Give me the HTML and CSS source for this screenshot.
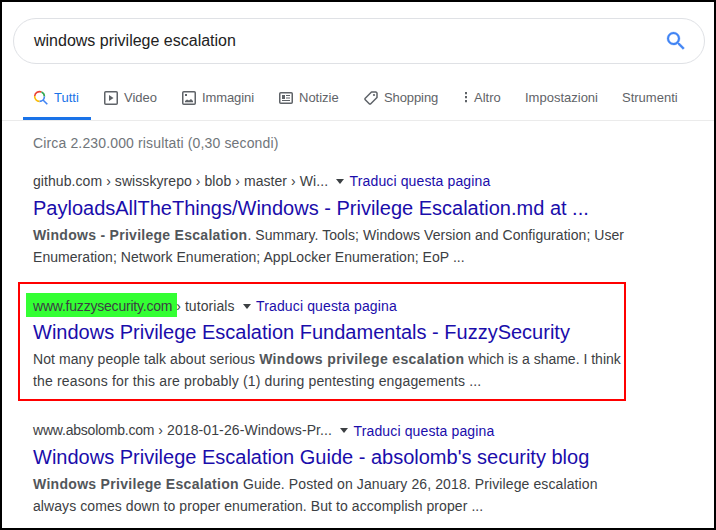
FILE: index.html
```html
<!DOCTYPE html>
<html lang="it">
<head>
<meta charset="utf-8">
<title>windows privilege escalation</title>
<link rel="stylesheet" href="styles.css">
</head>
<body>
<div class="page">
  <form class="search">
    <span class="query">windows privilege escalation</span>
    <svg class="lens" viewBox="0 0 24 24"><path d="M15.5 14h-.79l-.28-.27A6.47 6.47 0 0 0 16 9.5 6.5 6.5 0 1 0 9.5 16c1.61 0 3.09-.59 4.23-1.57l.27.28v.79l5 4.99L20.49 19l-4.99-5zm-6 0C7.01 14 5 11.99 5 9.5S7.01 5 9.5 5 14 7.01 14 9.5 11.99 14 9.5 14z"/></svg>
  </form>
  <nav class="tabs">
    <a class="tab tab-all">
      <svg class="icon" viewBox="0 0 16 16" fill="none" stroke-width="1.6"><path stroke="#ea4335" d="M1.700 6A4.9 4.9 0 0 1 8.500 2"/><path stroke="#34a853" d="M8.500 2A4.900 4.900 0 0 1 11.400 6.500"/><path stroke="#4285f4" d="M11.400 6.500A4.900 4.900 0 0 1 6.500 11.400M10 10l4.300 4.300"/><path stroke="#fbbc05" d="M6.500 11.400A4.900 4.900 0 0 1 1.700 6"/></svg><span>Tutti</span></a>
    <a class="tab tab-video">
      <svg class="icon" viewBox="0 0 16 16"><rect x="1.75" y="1.75" width="12.5" height="12.5" rx="1" fill="none" stroke="currentColor" stroke-width="1.5"/><path fill="currentColor" d="M6 5v6l4.5-3z"/></svg><span>Video</span></a>
    <a class="tab tab-images">
      <svg class="icon" viewBox="0 0 16 16"><rect x="1.75" y="1.75" width="12.5" height="12.5" rx="1" fill="none" stroke="currentColor" stroke-width="1.5"/><path fill="currentColor" d="M4 12.200V11l2-1.500 2 1 2-1.500 2 2v1.200zM4 4h2v2H4z"/></svg><span>Immagini</span></a>
    <a class="tab tab-news">
      <svg class="icon" viewBox="0 0 16 16"><rect x="1.75" y="2.75" width="12.5" height="10.5" rx="1" fill="none" stroke="currentColor" stroke-width="1.5"/><path fill="currentColor" d="M4 5h3v4H4zM8 5h4v1H8zM8 7.500h4v1H8zM4 10h8v1H4z"/></svg><span>Notizie</span></a>
    <a class="tab tab-shop">
      <svg class="icon" viewBox="0 0 16 16"><path fill="none" stroke="currentColor" stroke-width="1.5" stroke-linejoin="round" d="M8.500 2H13l1 1v4.500L7.500 14H6.500L2 9.500V8.500z"/><circle cx="11" cy="5" r="1.100" fill="currentColor"/></svg><span>Shopping</span></a>
    <a class="tab tab-more">
      <svg class="dots" viewBox="0 0 4 16"><path fill="currentColor" d="M1 2h2v2.300H1zM1 6h2v2.300H1zM1 10h2v2.300H1z"/></svg><span>Altro</span></a>
    <a class="tab tab-settings">Impostazioni</a>
    <a class="tab tab-tools">Strumenti</a>
  </nav>
  <main class="results">
    <p class="stats">Circa 2.230.000 risultati (0,30 secondi)</p>
    <article class="result github">
      <div class="source"><cite>github.com › swisskyrepo › blob › master › Wi...</cite><i class="caret"></i><a class="translate">Traduci questa pagina</a></div>
      <h3>PayloadsAllTheThings/Windows - Privilege Escalation.md at ...</h3>
      <p><b>Windows - Privilege Escalation</b>. Summary. Tools; Windows Version and Configuration; User<br>Enumeration; Network Enumeration; AppLocker Enumeration; EoP ...</p>
    </article>
    <article class="result boxed">
      <div class="source"><cite><mark>www.fuzzysecurity.com</mark> › tutorials</cite><i class="caret"></i><a class="translate">Traduci questa pagina</a></div>
      <h3>Windows Privilege Escalation Fundamentals - FuzzySecurity</h3>
      <p>Not many people talk about serious <b>Windows privilege escalation</b><span class="tight"> which is a shame. I think</span><br><span class="wide">the reasons for this are probably (1) during pentesting engagements ...</span></p>
    </article>
    <article class="result last">
      <div class="source"><cite><span class="domain">www.absolomb.com</span> › 2018-01-26-Windows-Pr...</cite><i class="caret"></i><a class="translate">Traduci questa pagina</a></div>
      <h3>Windows Privilege Escalation Guide - absolomb's security blog</h3>
      <p><b>Windows Privilege Escalation</b><span class="wide"> Guide. Posted on January 26, 2018. Privilege escalation</span><br>always comes down to proper enumeration. But to accomplish proper ...</p>
    </article>
  </main>
</div>
</body>
</html>
```
FILE: styles.css
```css
* { box-sizing: border-box; }
body { margin: 0; background: #fff; font-family: "Liberation Sans", Arial, sans-serif; }
.page { width: 716px; height: 530px; border: 2px solid #000; overflow: hidden; }

.search { display: flex; align-items: center; justify-content: space-between; width: 692px; height: 46px; margin: 16px 0 0 11px; padding: 0 16px 0 20px; border: 1px solid #dfe1e5; border-radius: 23px; }
.query { font-size: 16px; line-height: 20px; color: #222; white-space: nowrap; }
.lens { width: 24px; height: 24px; fill: #4285f4; stroke: #4285f4; stroke-width: .3; }

.tabs { display: flex; height: 57px; padding: 0 0 0 21px; border-bottom: 1px solid #ebebeb; color: #5f6368; font-size: 13px; line-height: 16px; }
.tab { display: flex; flex: none; align-items: center; height: 56px; padding-top: 11px; white-space: nowrap; }
.tab .icon { width: 16px; height: 16px; margin-right: 5px; }
.tab-all { width: 68px; padding-left: 10px; border-bottom: 3px solid #1a73e8; padding-top: 14px; color: #1a73e8; }
.tab-video { width: 78px; padding-left: 12px; }
.tab-images { width: 97px; padding-left: 12px; letter-spacing: -.1px; }
.tab-news { width: 85px; padding-left: 12px; }
.tab-shop { width: 99px; padding-left: 12px; letter-spacing: -.1px; }
.tab-more { width: 75px; padding-left: 14px; }
.tab-settings { width: 97px; }
.dots { width: 4px; height: 16px; margin-right: 6px; }

.results { padding-left: 31px; color: #3c4043; font-size: 14px; }
.stats { margin: 0; padding-top: 13px; height: 51px; line-height: 18px; color: #70757a; letter-spacing: .145px; }
.result { height: 125px; white-space: nowrap; }
.source { display: flex; align-items: center; height: 18px; line-height: 18px; }
cite { font-style: normal; letter-spacing: .07px; }
.caret { width: 0; margin: 0 5.5px 0 8px; border: 4px solid transparent; border-top: 5px solid #3c4043; border-bottom: 0; }
.translate, h3 { color: #1a0dab; }
.translate { letter-spacing: .13px; }
h3 { margin: 5px 0 0; font-size: 20px; font-weight: 400; line-height: 26px; }
.result p { margin: 3px 0 0; line-height: 22px; letter-spacing: .05px; }
.result b { color: #52565a; letter-spacing: .28px; }
.result .wide { letter-spacing: .155px; }
.tight { letter-spacing: 0; }
.domain { letter-spacing: -.2px; }

.boxed { width: 608px; height: 119px; margin: -15px 0 0 -15px; padding: 13px 0 0 13px; border: 2px solid #f00; }
.boxed h3 { margin-top: 4px; }
.boxed p { letter-spacing: .08px; }
.boxed b { letter-spacing: .36px; }
mark { margin: 0 -5px 0 -7px; padding: 5px 5px 3px 7px; background: #3f3; color: #3c4043; letter-spacing: -.21px; }

.last { margin-top: 20px; }
.last cite { letter-spacing: .1px; }
.last p { letter-spacing: .075px; }
.last b { letter-spacing: .3px; }
.last .wide { letter-spacing: .11px; }
.last .translate { padding-top: 2px; }
```
